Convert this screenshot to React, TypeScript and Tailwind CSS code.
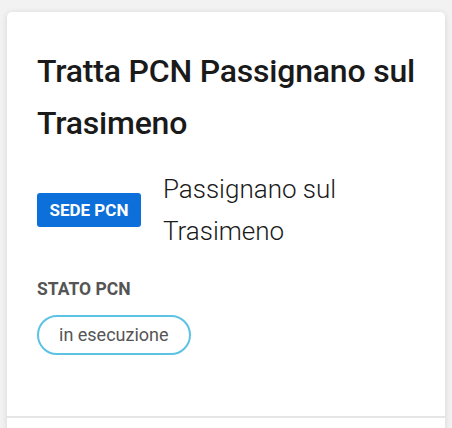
import React from 'react';

const font = { fontFamily: 'Roboto, "Open Sans", sans-serif' };

export default function App() {
    return (
        <div className="min-h-[428px] w-[452px] bg-[#f2f2f2] px-[7px] pt-[12px]" style={font}>
            <div className="flex flex-col rounded-t-[5px] bg-white shadow-[0_1px_6px_rgba(0,0,0,0.12)]">
                <div className="px-[30px] pt-[33px] pb-[61px]">
                    <h3 className="text-[32px] font-medium leading-[52px] tracking-[-0.2px] text-[#1a1a1a]">
                        Tratta PCN Passignano sul Trasimeno
                    </h3>

                    <div className="mt-[19px] flex items-center gap-[22px]">
                        <span className="rounded-[3px] bg-[#0d6fd9] px-[12.5px] py-[6px] text-[17px] font-bold leading-[22px] text-white">
                            SEDE PCN
                        </span>
                        <span className="text-[26px] font-light leading-[42px] text-[#1a1a1a]">
                            Passignano sul
                            <br />
                            Trasimeno
                        </span>
                    </div>

                    <div className="mt-[27px] text-[17.5px] font-bold leading-[20px] text-[#555]">STATO PCN</div>

                    <div className="mt-[16px] flex">
                        <span className="rounded-full border-2 border-[#5cc3e4] px-[20px] py-[6px] text-[18px] leading-[24px] text-[#555]">
                            in esecuzione
                        </span>
                    </div>
                </div>
                <div className="h-[2px] bg-[#e6e6e6]" />
                <div className="h-[12px]" />
            </div>
        </div>
    );
}
